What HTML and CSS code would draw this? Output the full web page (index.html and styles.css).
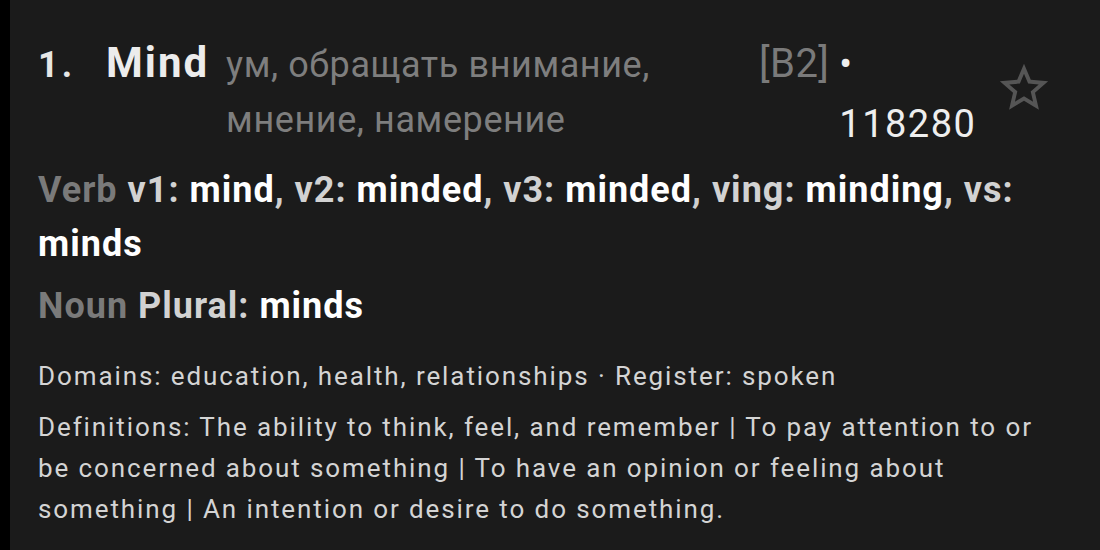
FILE: index.html
```html
<!DOCTYPE html>
<html lang="en">
<head>
<meta charset="utf-8">
<title>Mind</title>
<link rel="stylesheet" href="styles.css">
</head>
<body>
<div class="card">
  <div class="entry-head">
    <span class="num">1.</span>
    <span class="word">Mind</span>
    <span class="trans">ум, обращать внимание, мнение, намерение</span>
    <span class="meta"><span class="level">[B2]</span><span class="freq">• 118280</span></span>
    <span class="star" aria-label="favorite">
      <svg viewBox="0 0 24 24" width="58" height="58"><path fill="#555555" d="M22 9.24l-7.19-.62L12 2 9.19 8.630 2 9.24l5.46 4.73L5.82 21 12 17.27 18.18 21l-1.630-7.03L22 9.24zM12 15.4l-3.76 2.27 1-4.28-3.32-2.88 4.38-.38L12 6.1l1.71 4.04 4.38.38-3.32 2.88 1 4.28L12 15.4z"/></svg>
    </span>
  </div>
  <div class="forms">
    <div class="form-line"><span class="pos">Verb</span> <span class="lbl">v1:</span> <span class="val">mind</span><span class="sep">, </span><span class="lbl">v2:</span> <span class="val">minded</span><span class="sep">, </span><span class="lbl">v3:</span> <span class="val">minded</span><span class="sep">, </span><span class="lbl">ving:</span> <span class="val">minding</span><span class="sep">, </span><span class="lbl">vs:</span> <span class="val">minds</span></div>
    <div class="form-line"><span class="pos">Noun</span> <span class="lbl">Plural:</span> <span class="val">minds</span></div>
  </div>
  <div class="details">
    <p class="info">Domains: education, health, relationships · Register: spoken</p>
    <p class="info">Definitions: The ability to think, feel, and remember | To pay attention to or be concerned about something | To have an opinion or feeling about something | An intention or desire to do something.</p>
    <p class="info info-last">Related forms: mindful (adj), mindfulness (n), mindless (adj), mindset (n), mastermind</p>
  </div>
</div>
</body>
</html>
```
FILE: styles.css
```css
html, body {
  margin: 0;
  padding: 0;
  background: #000;
  height: 100%;
  overflow: hidden;
}
body {
  font-family: Roboto, "Noto Sans", "Liberation Sans", sans-serif;
}
.card {
  margin-left: 10px;
  background: #1b1b1b;
  height: 100%;
  padding: 34px 38px 0 28px;
  box-sizing: border-box;
  overflow: hidden;
}
.entry-head {
  display: flex;
  align-items: baseline;
}
.num {
  font-size: 36px;
  font-weight: 700;
  color: #e6e6e6;
  width: 68px;
  flex: none;
  line-height: 55px;
  letter-spacing: 3px;
}
.word {
  font-size: 42px;
  font-weight: 700;
  color: #ececec;
  line-height: 50px;
  flex: none;
  letter-spacing: 2px;
}
.trans {
  font-size: 36px;
  color: #7e7e7e;
  line-height: 55px;
  width: 500px;
  margin-left: 17px;
  flex: none;
  letter-spacing: 0.6px;
}
.meta {
  display: flex;
  align-items: baseline;
  margin-left: 33px;
  line-height: 60px;
  flex: none;
}
.level {
  font-size: 40px;
  color: #7a7a7a;
  letter-spacing: 0.4px;
}
.freq {
  font-size: 38px;
  color: #eeeeee;
  width: 145px;
  margin-left: 10px;
  letter-spacing: 1.5px;
}
.star {
  align-self: flex-start;
  margin-left: auto;
  margin-right: 9px;
  margin-top: 25px;
  display: flex;
}
.forms {
  margin-top: 9px;
  font-size: 36px;
  font-weight: 700;
  line-height: 54px;
  letter-spacing: 1px;
}
.form-line + .form-line {
  margin-top: 8px;
}
.pos { color: #7a7a7a; }
.lbl { color: #d2d2d2; }
.val { color: #ffffff; }
.sep { color: #cfcfcf; }
.details {
  margin-top: 23px;
}
.info {
  margin: 0 0 10px 0;
  font-size: 26px;
  line-height: 41px;
  color: #d4d4d4;
  letter-spacing: 1.9px;
}
.info-last {
  margin-top: 14px;
}
```
